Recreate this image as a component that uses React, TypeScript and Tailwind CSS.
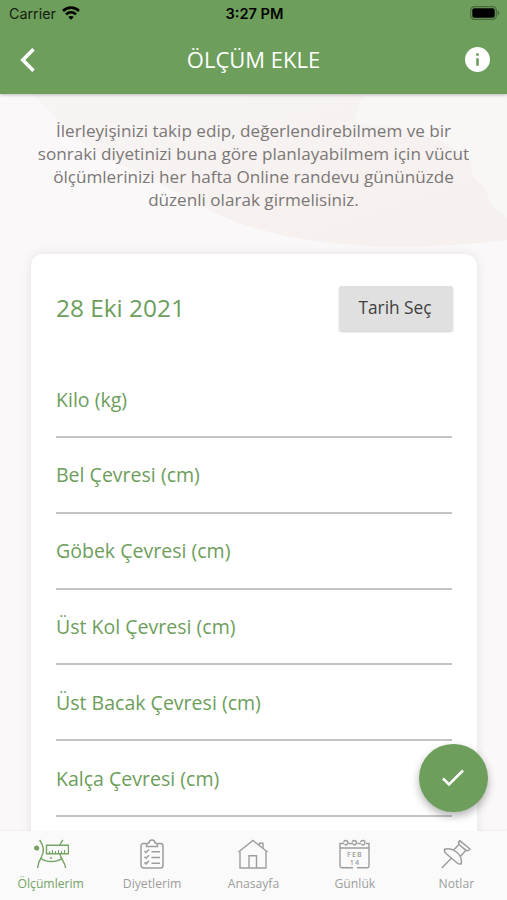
import React, { useState } from 'react';

const fields = [
  'Kilo (kg)',
  'Bel Çevresi (cm)',
  'Göbek Çevresi (cm)',
  'Üst Kol Çevresi (cm)',
  'Üst Bacak Çevresi (cm)',
  'Kalça Çevresi (cm)',
];

const WaistIcon = () => (
  <svg width="36" height="30" viewBox="0 0 36 30" fill="none" stroke="currentColor" strokeWidth="1.4">
    <circle cx="3.6" cy="9" r="1.9" fill="currentColor" />
    <path d="M6.600 1C11 7 11.500 13 8.200 18.500 5.500 22.500 5 25 4.600 29" />
    <path d="M30 1c-1.500 1.500-2.500 3-3 5M27 15c.2 4.500 5 7.500 5.600 14" />
    <path d="M7.600 19.300c5.400 4.300 16.400 4.300 21.800 0" />
    <path d="M13.500 6.200h22v8.600h-22z" />
    <path d="M16.500 14.500V12M19.500 14.500v-3.500M22.500 14.500V12M25.500 14.500v-3.500M28.500 14.500V12M31.500 14.500v-3.500" strokeWidth="1.100" />
    <circle cx="18" cy="19" r="1" fill="currentColor" stroke="none" />
  </svg>
);

const ClipboardIcon = () => (
  <svg width="24" height="30" viewBox="0 0 24 30" fill="none" stroke="currentColor" strokeWidth="1.5">
    <path d="M6.500 4.500H3.500A2.500 2.500 0 0 0 1 7v19.500A2.500 2.500 0 0 0 3.500 29h17a2.500 2.500 0 0 0 2.500-2.500V7a2.500 2.500 0 0 0-2.500-2.500h-3" />
    <path d="M6.500 7.500v-1.500c0-1.400 1-2 2.500-2 0-4 6-4 6 0 1.500 0 2.500.6 2.500 2v1.500z" />
    <path d="m4.500 12 1.500 1.500 3-3M4.500 17.700 6 19.200l3-3M4.500 23.400 6 24.900l3-3M11.500 12.800H20M11.500 18.500H20M11.500 24.200H20" />
  </svg>
);

const HomeIcon = () => (
  <svg width="30" height="30" viewBox="0 0 30 30" fill="none" stroke="currentColor" strokeWidth="1.4">
    <path d="M.5 13 15 1.500 29.500 13M2 12v17h26V12" />
    <path d="M21.500 6.500V4.300H25v5M11 29V16.800h7.500V29" />
  </svg>
);

const CalendarIcon = () => (
  <svg width="32" height="30" viewBox="0 0 32 30" fill="none" stroke="currentColor" strokeWidth="1.4">
    <path d="M14 28.800H3a2 2 0 0 1-2-2V4.500h4M9.500 4.500H14M18.500 4.500H22M27 4.500h3v22.300a2 2 0 0 1-2 2H18M1 9h29" />
    <path d="M4.500 3c1-2.300 4.500-1.700 4.500.5S6.500 6.700 5.500 5.200M13 3c1-2.300 4.500-1.700 4.500.5S15 6.700 14 5.200M21.500 3c1-2.300 4.500-1.700 4.500.5S23.500 6.700 22.500 5.200" />
    <g fill="currentColor" stroke="none" className="font-['Open_Sans',sans-serif] font-semibold" fontSize="7" textAnchor="middle">
      <text x="16" y="17.500" letterSpacing="1.200">FEB</text>
      <text x="16" y="26.200" letterSpacing="1.200">14</text>
    </g>
  </svg>
);

const PinIcon = () => (
  <svg width="30" height="30" viewBox="0 0 30 30" fill="none" stroke="currentColor" strokeWidth="1.5" strokeLinejoin="round">
    <path d="M18.800 1.700 29 10c-.8 1.500-2.400 2-4 1.300l-7-5.800c-.6-1.500-.3-2.900.8-3.800z" />
    <path d="m17.800 5.800-5 5M25 11.300l-5.500 6" />
    <path d="M3.500 10.300c3.800-1.300 8-.4 12 2.700 4 3.200 5.600 7.200 4.700 12-1.500.3-2.700 0-4-1L5 14.500c-1.300-1.200-1.900-2.600-1.500-4.200z" />
    <path d="M10.500 19 .8 29" />
  </svg>
);

const tabs = [
  { label: 'Ölçümlerim', Icon: WaistIcon },
  { label: 'Diyetlerim', Icon: ClipboardIcon },
  { label: 'Anasayfa', Icon: HomeIcon },
  { label: 'Günlük', Icon: CalendarIcon },
  { label: 'Notlar', Icon: PinIcon },
];

const StatusBar = () => (
  <div className="grid h-7 grid-cols-3 items-center pl-[9px] pr-[7px] font-[Inter,sans-serif] text-sm text-[#142010]">
    <div className="flex items-center gap-[6px]">
      <span className="text-[14.300px]">Carrier</span>
      <svg className="-mt-0.5" width="18" height="14" viewBox="0 0 18 14" fill="none" stroke="black" strokeWidth="2.600">
        <path d="M1 5c4.600-4.500 11.400-4.500 16 0M4 8.400c3-2.800 7-2.800 10 0" />
        <path d="M9 13.800 6.200 11c1.600-1.500 4-1.500 5.600 0z" fill="black" stroke="none" />
      </svg>
    </div>
    <span className="text-center text-[14.600px] font-semibold text-black">3:27 PM</span>
    <svg className="-mt-0.5 justify-self-end" width="30" height="14" viewBox="0 0 30 14">
      <rect x=".7" y=".7" width="25.600" height="12.600" rx="3.600" fill="none" stroke="#47693a" strokeWidth="1.200" />
      <rect x="2.300" y="2.300" width="22.400" height="9.400" rx="2" fill="black" />
      <path d="M27.700 4.500c2 .8 2 4.200 0 5z" fill="#47693a" />
    </svg>
  </div>
);

const App: React.FC = () => {
  const [activeTab, setActiveTab] = useState(0);

  return (
    <div className="relative flex h-[900px] w-full flex-col overflow-hidden bg-[#faf8f9] font-['Open_Sans',sans-serif]">
      <header className="relative z-10 h-[94px] shrink-0 bg-[#6d9e5b] shadow-[0_1px_3px_rgba(0,0,0,0.25)]">
        <StatusBar />
        <div className="flex h-[63px] items-center justify-between pl-5 pr-[17px] text-white">
          <button aria-label="Geri">
            <svg width="16" height="24" viewBox="0 0 16 24" fill="none" stroke="currentColor" strokeWidth="3.600">
              <path d="M13.500 1.300 2.800 12l10.700 10.700" />
            </svg>
          </button>
          <h1 className="pl-1.5 text-[22px]">ÖLÇÜM EKLE</h1>
          <button aria-label="Bilgi">
            <svg width="25" height="25" viewBox="0 0 25 25">
              <circle cx="12.500" cy="12.500" r="12.500" fill="white" />
              <path d="M11.200 6.300h2.600v2.500h-2.600zM11.200 11.200h2.600v7.500h-2.600z" fill="#6d9e5b" />
            </svg>
          </button>
        </div>
      </header>

      <main className="relative min-h-0 flex-1 overflow-hidden">
        {/* Decorative leaf behind the intro text */}
        <svg className="absolute left-0 top-0" width="507" height="156" viewBox="0 0 507 156">
          <defs>
            <linearGradient id="leaf" x1="0" y1="0" x2="1" y2="1">
              <stop offset="0" stopColor="#f7f4f3" />
              <stop offset="1" stopColor="#f6f0ee" />
            </linearGradient>
          </defs>
          <path d="M32 0C62 32 91 60 132 76c35 15 59 32 89 46 65 27 150 39 286 24v-22l-16-14-5-15-12-11-4-18-28-19-47-15-37-2c-5-10 0-22 10-30z" fill="url(#leaf)" />
          <path d="M368 0c-10 8-15 20-10 30l37 2 47 15 28 19 4 18 12 11 5 15 16 14V0z" fill="#f9f6f6" />
        </svg>

        <p className="relative px-8 pt-[24.500px] text-center text-[17.120px] leading-[23.300px] text-[#7b7776]">
          İlerleyişinizi takip edip, değerlendirebilmem ve bir
          <br />
          sonraki diyetinizi buna göre planlayabilmem için vücut
          <br />
          ölçümlerinizi her hafta Online randevu gününüzde
          <br />
          düzenli olarak girmelisiniz.
        </p>

        <section className="relative ml-[31px] mr-[30px] mt-[42px] h-[620px] rounded-xl bg-white px-[25px] pt-8 text-[#6d9e5b] shadow-[0_0_12px_rgba(0,0,0,0.09)]">
          <div className="-mr-px flex h-[45px] items-center justify-between">
            <span className="text-[24.400px]">28 Eki 2021</span>
            <button className="h-[45px] w-[114px] rounded-[3px] bg-[#e0e0e0] pr-0.5 text-[17.300px] text-[#3e3e3e] shadow-[0_1px_2px_rgba(0,0,0,0.2)]">
              Tarih Seç
            </button>
          </div>
          <div className="mt-[31.600px]">
            {fields.map((field) => (
              <label
                key={field}
                className="flex h-[75.800px] items-center border-b-2 border-[#c4c4c4] text-[19.550px]"
              >
                {field}
              </label>
            ))}
          </div>
        </section>
      </main>

      <button
        aria-label="Kaydet"
        className="absolute bottom-[88px] right-[19.500px] z-10 flex size-[68.500px] items-center justify-center rounded-full bg-[#6d9e5b] text-white shadow-[0_4px_9px_rgba(0,0,0,0.3)]"
      >
        <svg width="24" height="18" viewBox="0 0 24 18" fill="none" stroke="currentColor" strokeWidth="2.500">
          <path d="m2 9.500 6 6L22 1.500" />
        </svg>
      </button>

      <nav className="grid h-[69px] shrink-0 grid-cols-5 bg-[#fafafa] shadow-[0_-1px_2px_rgba(0,0,0,0.04)]">
        {tabs.map(({ label, Icon }, index) => (
          <button
            key={label}
            onClick={() => setActiveTab(index)}
            className={`flex flex-col items-center pt-2 text-[12.200px] ${activeTab === index ? 'text-[#74a363]' : 'text-[#9d9d9d]'}`}
          >
            <Icon />
            <span className="mt-[7px] leading-4">{label}</span>
          </button>
        ))}
      </nav>
    </div>
  );
};

export default App;
